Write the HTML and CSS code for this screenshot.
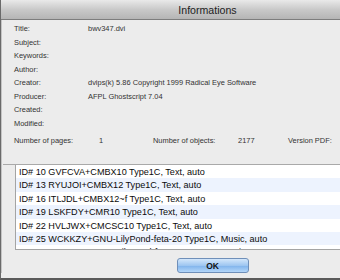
FILE: index.html
```html
<!DOCTYPE html>
<html lang="en">
<head>
  <meta charset="UTF-8" />
  <title>Informations</title>
  <link rel="stylesheet" href="styles.css">
</head>
<body>
  <div class="window">
    <div class="titlebar">Informations</div>
    <div class="content">
      <div class="info">
        <span class="label">Title:</span><span>bwv347.dvi</span>
        <span class="label">Subject:</span><span></span>
        <span class="label">Keywords:</span><span></span>
        <span class="label">Author:</span><span></span>
        <span class="label">Creator:</span><span>dvips(k) 5.86 Copyright 1999 Radical Eye Software</span>
        <span class="label">Producer:</span><span>AFPL Ghostscript 7.04</span>
        <span class="label">Created:</span><span></span>
        <span class="label">Modified:</span><span></span>
      </div>
      <div class="counts">
        <span class="c-label">Number of pages:</span><span class="c-val">1</span>
        <span class="c-label">Number of objects:</span><span class="c-val wide">2177</span>
        <span class="c-label">Version PDF:</span>
      </div>
      <div class="fonts">
        <ul class="font-list">
          <li>ID# 10 GVFCVA+CMBX10 Type1C, Text, auto</li>
          <li>ID# 13 RYUJOI+CMBX12 Type1C, Text, auto</li>
          <li>ID# 16 ITLJDL+CMBX12~f Type1C, Text, auto</li>
          <li>ID# 19 LSKFDY+CMR10 Type1C, Text, auto</li>
          <li>ID# 22 HVLJWX+CMCSC10 Type1C, Text, auto</li>
          <li>ID# 25 WCKKZY+GNU-LilyPond-feta-20 Type1C, Music, auto</li>
          <li>ID# 28 WEPECH+GNU-LilyPond-feta-14 Type1C, Music, auto</li>
        </ul>
      </div>
      <div class="footer">
        <button class="ok">OK</button>
      </div>
    </div>
  </div>
</body>
</html>
```

FILE: styles.css
```css
html, body { overflow: hidden; }
body { margin: 0; background: #ececec; font-family: "Liberation Sans", Arial, sans-serif; }
.window { width: 414px; height: 280px; box-sizing: border-box; border-left: 1px solid #6a6a6a; border-bottom: 2px solid #5a5a5a; background: #ececec; }
.titlebar { height: 19px; line-height: 20px; text-align: center; font-size: 10.6px; color: #222; background: linear-gradient(#e9e9e9, #c9c9c9 50%, #b5b5b5); border-bottom: 1px solid #7d7d7d; }
.content { padding: 2px 0 0 1px; border-left: 1px solid #c4c4c4; }

.info { display: grid; grid-template-columns: 74px 1fr; padding-left: 11px; font-size: 7.45px; line-height: 13.5px; color: #333; }
.counts { display: flex; padding-left: 11px; margin-top: 4px; font-size: 7.45px; line-height: 14px; color: #333; }
.c-label { width: 85px; }
.c-val { width: 54px; }
.c-val.wide { width: 50px; }

.fonts { margin-top: 16px; border-top: 1px solid #a9a9a9; padding-left: 12px; }
.font-list { list-style: none; margin: 0; padding: 0; height: 84px; overflow: hidden; background: #fff; border-left: 1px solid #a4a4a4; border-bottom: 1px solid #a4a4a4; }
.font-list li { height: 13.4px; line-height: 14px; padding-left: 3px; font-size: 9.1px; color: #0a0a0a; white-space: nowrap; }
.font-list li:nth-child(even) { background: #edf3fe; }

.footer { display: flex; justify-content: center; padding: 8px 0 0 8px; }
.ok { width: 72px; height: 15px; padding: 0; border: 1px solid #6f8fb9; border-radius: 3px; font-family: inherit; font-size: 8.5px; font-weight: bold; color: #111; background: linear-gradient(#d4e7fb, #9ec6f1 50%, #7fb3ec 51%, #b3d6f8); }
```
